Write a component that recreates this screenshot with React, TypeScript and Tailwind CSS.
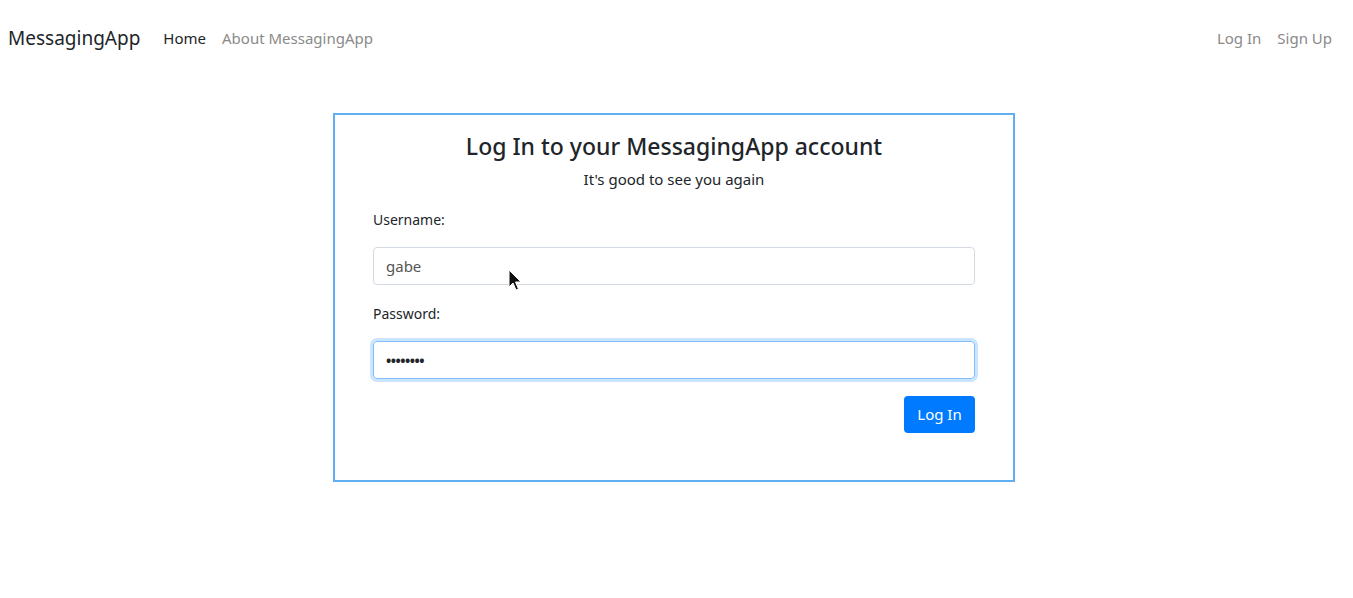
import React from 'react';

const font = { fontFamily: '"Noto Sans", "Open Sans", Arial, sans-serif' };

function Cursor() {
  return (
    <svg width="16" height="24" viewBox="0 0 16 24" className="absolute left-[508px] top-[269px]">
      <path d="M1 1 L1 18 L5 14 L8 21 L10.5 20 L7.5 13 L13 13 Z" fill="#111" stroke="#fff" strokeWidth="1" />
    </svg>
  );
}

export default function App() {
  return (
    <div className="relative w-[1353px] h-[598px] bg-white text-[#212529]" style={font}>
      {/* Navbar */}
      <nav className="flex items-center h-[76px] px-2">
        <span className="text-[19px] text-[#212529] mr-[23px]">MessagingApp</span>
        <a className="text-[15px] text-[#212529] mr-4">Home</a>
        <a className="text-[15px] text-[#8a8a8a]">About MessagingApp</a>
        <div className="ml-auto flex gap-4 pr-[13px] text-[15px] text-[#8a8a8a]">
          <a>Log In</a>
          <a>Sign Up</a>
        </div>
      </nav>

      {/* Login card */}
      <div className="flex pl-[333px] pt-[37px]">
        <div className="w-[682px] h-[369px] border-2 border-[#62aef3] px-[38px] pt-[14px]">
          <h4 className="text-center text-[23px] font-medium leading-[34px]">Log In to your MessagingApp account</h4>
          <p className="text-center text-[15px] leading-[20px] mt-[6px]">It's good to see you again</p>

          <form className="mt-[20px]" onSubmit={(e) => e.preventDefault()}>
            <label className="block text-[14px] mb-[17px]">Username:</label>
            <div className="h-[38px] border border-[#d3dae2] rounded-[4px] px-3 flex items-center text-[15px] text-[#555]">gabe</div>

            <label className="block text-[14px] mt-[18px] mb-[17px]">Password:</label>
            <div className="h-[38px] border border-[#80bdff] rounded-[4px] px-3 flex items-center text-[15px] text-[#212529] shadow-[0_0_0_3px_rgba(0,123,255,0.2)]">
              <span className="tracking-[-0.5px] text-[14px] font-bold">••••••••</span>
            </div>

            <div className="flex justify-end mt-[17px]">
              <button type="submit" className="w-[71px] h-[37px] bg-[#007bff] text-white text-[15px] rounded-[4px]">Log In</button>
            </div>
          </form>
        </div>
      </div>

      <Cursor />
    </div>
  );
}
